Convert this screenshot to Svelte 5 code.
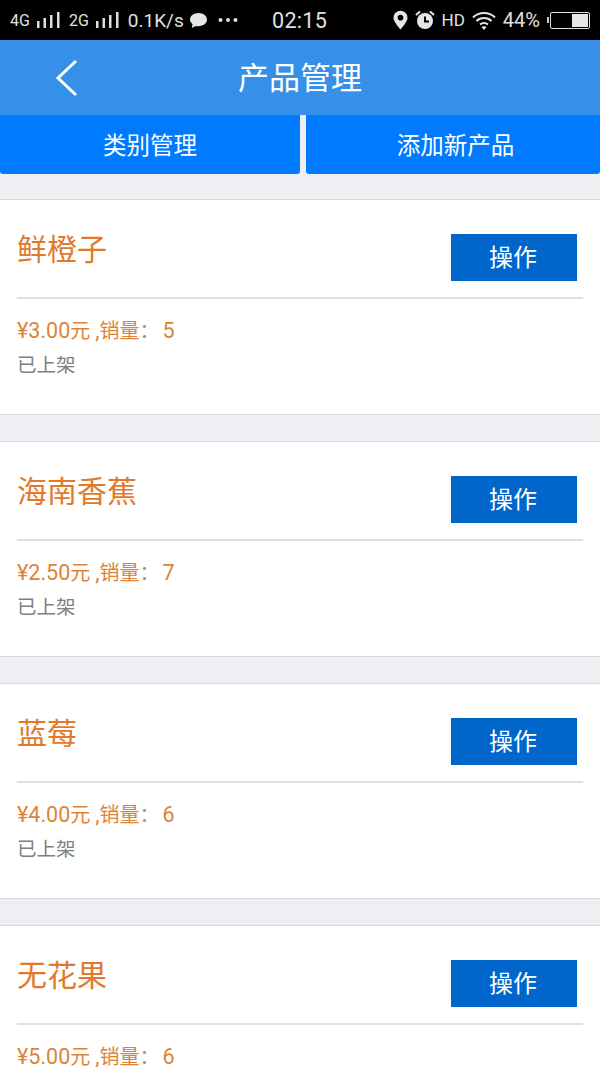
<script>
  const products = [
    { name: '鲜橙子', price: '¥3.00', sales: 5 },
    { name: '海南香蕉', price: '¥2.50', sales: 7 },
    { name: '蓝莓', price: '¥4.00', sales: 6 },
    { name: '无花果', price: '¥5.00', sales: 6 }
  ];
</script>

<div class="page">
  <div class="status">
    <div class="status-side">
      <span class="net">4G</span>
      <svg class="bars" width="24" height="16" viewBox="0 0 24 16"><path d="M1 9h2.500v7H1zM7.500 6H10v10H7.500zM14 3h2.500v13H14zM21 0h2.500v16H21z" fill="#ddd"/></svg>
      <span class="net second">2G</span>
      <svg class="bars" width="24" height="16" viewBox="0 0 24 16"><path d="M1 9h2.500v7H1zM7.500 6H10v10H7.500zM14 3h2.500v13H14zM21 0h2.500v16H21z" fill="#ddd"/></svg>
      <span class="speed">0.1K/s</span>
      <svg class="bubble" width="19" height="17" viewBox="0 0 20 18"><path d="M10 1c5 0 9 3 9 7s-4 7-9 7c-1 0-2 0-3-.3L3 17l.7-4.200C2 11.500 1 9.800 1 8c0-4 4-7 9-7z" fill="#e6e6e6"/></svg>
      <svg class="dots" width="20" height="6" viewBox="0 0 20 6"><circle cx="2.500" cy="3" r="2" fill="#ddd"/><circle cx="10" cy="3" r="2" fill="#ddd"/><circle cx="17.500" cy="3" r="2" fill="#ddd"/></svg>
    </div>
    <span class="clock">02:15</span>
    <div class="status-side right">
      <svg width="15" height="20" viewBox="0 0 16 20"><path fill-rule="evenodd" d="M8 0a7.500 7.500 0 0 1 7.500 7.500C15.500 12 8 20 8 20S.5 12 .5 7.500A7.500 7.500 0 0 1 8 0zm0 4.500a3 3 0 1 0 0 6 3 3 0 0 0 0-6z" fill="#e6e6e6"/></svg>
      <svg width="20" height="20" viewBox="0 0 20 20"><circle cx="10" cy="11" r="8" fill="#e6e6e6"/><path d="M10 6.500V11.500H14" stroke="#000" stroke-width="2" fill="none"/><path d="M1 5l4-3.500M19 5l-4-3.500" stroke="#e6e6e6" stroke-width="2.200"/></svg>
      <span class="hd">HD</span>
      <svg width="24" height="19" viewBox="0 0 24 19"><g fill="none" stroke="#e6e6e6" stroke-width="2"><path d="M1 6.500c6-6 16-6 22 0"/><path d="M4.500 10c4-4 11-4 15 0"/><path d="M8 13.500c2.200-2 5.800-2 8 0"/></g><path d="M12 19l-2.500-3c1.500-1 3.500-1 5 0z" fill="#e6e6e6"/></svg>
      <span class="pct">44%</span>
      <div class="battery-wrap">
        <span class="nub"></span>
        <div class="battery"><span class="level"></span></div>
      </div>
    </div>
  </div>

  <header class="header">
    <svg class="back" width="24" height="40" viewBox="0 0 24 40"><path d="M21 3L3 20l18 17" fill="none" stroke="#fff" stroke-width="3"/></svg>
    <h1>产品管理</h1>
  </header>

  <div class="actions">
    <button class="action first">类别管理</button>
    <button class="action last">添加新产品</button>
  </div>

  <div class="list">
    {#each products as p}
      <section class="card">
        <div class="top">
          <h2>{p.name}</h2>
          <button class="op">操作</button>
        </div>
        <div class="info">
          <p class="price"><span class="num">{p.price}</span>元 <span class="num">,</span>销量：<span class="num sales">{p.sales}</span></p>
          <p class="state">已上架</p>
        </div>
      </section>
    {/each}
  </div>
</div>

<style>
  :global(body) {
    margin: 0;
    background: #eeeef3;
  }
  .page {
    width: 600px;
    height: 1067px;
    overflow: hidden;
    background: #eeeef3;
    font-family: "Roboto", "Noto Sans CJK SC", sans-serif;
  }
  .status {
    height: 40px;
    background: #000;
    color: #e0e0e0;
    display: flex;
    align-items: center;
    justify-content: space-between;
    padding: 0 10px;
    box-sizing: border-box;
    position: relative;
  }
  .status-side {
    display: flex;
    align-items: center;
  }
  .status-side.right {
    gap: 7px;
  }
  .net {
    font-size: 16px;
    margin-right: 6px;
  }
  .net.second {
    margin-left: 9px;
  }
  .speed {
    font-size: 19px;
    margin-left: 9px;
  }
  .bubble {
    margin-left: 5px;
  }
  .dots {
    margin-left: 10px;
  }
  .clock {
    position: absolute;
    left: 272px;
    font-size: 21.500px;
    letter-spacing: 0.3px;
  }
  .hd {
    font-size: 17px;
  }
  .pct {
    font-size: 20px;
  }
  .battery-wrap {
    display: flex;
    align-items: center;
    gap: 1px;
  }
  .nub {
    width: 2px;
    height: 6px;
    background: #ccc;
  }
  .battery {
    width: 40px;
    height: 17px;
    box-sizing: border-box;
    border: 1.500px solid #ddd;
    border-radius: 2px;
    display: flex;
    justify-content: flex-end;
    padding: 1px;
  }
  .level {
    width: 16px;
    background: #e6e6e6;
  }
  .header {
    height: 75px;
    box-sizing: border-box;
    padding-bottom: 4px;
    background: #3790e8;
    display: flex;
    align-items: center;
    justify-content: center;
    position: relative;
  }
  .back {
    position: absolute;
    left: 55px;
    top: 18px;
  }
  h1 {
    margin: 0;
    font-size: 31px;
    font-weight: 400;
    color: #fff;
  }
  .actions {
    display: flex;
    gap: 6px;
  }
  .action {
    flex: 1;
    height: 59px;
    border: 0;
    border-radius: 0 0 3px 3px;
    background: #007aff;
    color: #fff;
    font: inherit;
    font-size: 23.500px;
    padding: 0 0 2px;
  }
  .action.first {
    flex: none;
    width: 300px;
  }
  .action.last {
    padding-left: 5px;
  }
  .list {
    padding-top: 25px;
    display: flex;
    flex-direction: column;
    gap: 26px;
  }
  .card {
    height: 214px;
    background: #fff;
    border-top: 1px solid #d9d9d9;
    border-bottom: 1px solid #d9d9d9;
    padding: 0 17px;
    flex: none;
  }
  .top {
    height: 97px;
    border-bottom: 2px solid #e0e0e0;
    display: flex;
    justify-content: space-between;
    align-items: flex-start;
  }
  h2 {
    margin: 28px 0 0;
    font-size: 30px;
    line-height: 44px;
    font-weight: 400;
    color: #e2792a;
  }
  .op {
    width: 126px;
    height: 47px;
    margin: 34px 6px 0 0;
    border: 0;
    background: #0066cc;
    color: #fff;
    font: inherit;
    font-size: 24px;
    padding: 0 2px 4px 0;
  }
  .info {
    padding-top: 18px;
  }
  .price {
    margin: 0;
    font-size: 20px;
    line-height: 28px;
    color: #dc8338;
  }
  .num {
    font-size: 21.500px;
  }
  .sales {
    margin-left: 3px;
  }
  .state {
    margin: 7px 0 0;
    font-size: 19.500px;
    line-height: 28px;
    color: #808080;
  }
</style>
